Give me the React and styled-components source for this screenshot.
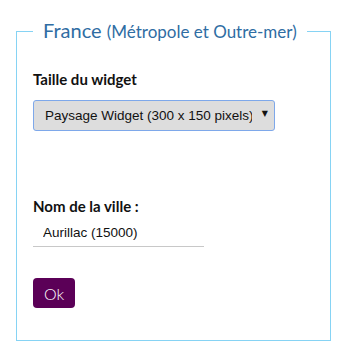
import React, { useState } from 'react';
import styled, { createGlobalStyle } from 'styled-components';

const GlobalStyle = createGlobalStyle`
  body {
    margin: 0;
    padding: 0;
    background: #fff;
    font-family: "Lato", "Noto Sans", sans-serif;
  }
`;

const Page = styled.div`
  padding: 18px 14px 14px 16px;
`;

const Fieldset = styled.fieldset`
  margin: 0;
  min-width: 0;
  border: 1px solid #86d3f4;
  padding: 26px 16px 32px 16px;
`;

const Legend = styled.legend`
  padding: 0 10px;
  color: #2f6da3;
  font-size: 20px;
  line-height: 24px;
  font-weight: 400;

  small {
    font-size: 17px;
  }
`;

const Field = styled.div`
  margin-bottom: ${({ $gap }) => $gap || 0}px;
`;

const Label = styled.label`
  display: block;
  font-size: 15px;
  font-weight: 700;
  color: #111;
  line-height: 18px;
  margin-bottom: ${({ $space }) => $space || 12}px;
`;

const SelectWrap = styled.div`
  position: relative;
  width: 242px;
`;

const Select = styled.select`
  appearance: none;
  -webkit-appearance: none;
  width: 100%;
  height: 31px;
  box-sizing: border-box;
  background: #dddddd;
  border: 1px solid #7ea8ea;
  border-radius: 3px;
  padding: 0 22px 0 11px;
  font-family: "Liberation Sans", Arial, sans-serif;
  font-size: 13.5px;
  color: #111;
  outline: none;
`;

const Arrow = styled.span`
  position: absolute;
  right: 7px;
  top: 9px;
  font-family: "DejaVu Sans", sans-serif;
  font-size: 8px;
  color: #111;
  pointer-events: none;
`;

const TextInput = styled.input`
  display: block;
  width: 171px;
  box-sizing: border-box;
  border: none;
  border-bottom: 1px solid #c8c8c8;
  padding: 0 10px 6px;
  font-family: "Liberation Sans", Arial, sans-serif;
  font-size: 13.5px;
  color: #111;
  outline: none;
  background: transparent;
`;

const Button = styled.button`
  display: block;
  margin-top: 31px;
  width: 42px;
  height: 30px;
  border: none;
  border-radius: 4px;
  background: #5b0057;
  color: #fff;
  font-family: "Lato", "Noto Sans", sans-serif;
  font-size: 16px;
  font-weight: 300;
  cursor: pointer;
  padding: 0;
`;

export default function App() {
  const [size, setSize] = useState('paysage');
  const [city, setCity] = useState('Aurillac (15000)');

  return (
    <>
      <GlobalStyle />
      <Page>
        <Fieldset>
          <Legend>
            France <small>(Métropole et Outre-mer)</small>
          </Legend>
          <Field $gap={66}>
            <Label htmlFor="taille">Taille du widget</Label>
            <SelectWrap>
              <Select id="taille" value={size} onChange={(e) => setSize(e.target.value)}>
                <option value="paysage">Paysage Widget (300 x 150 pixels)</option>
                <option value="portrait">Portrait Widget (150 x 300 pixels)</option>
              </Select>
              <Arrow>▼</Arrow>
            </SelectWrap>
          </Field>
          <Field>
            <Label htmlFor="ville" $space={10}>Nom de la ville :</Label>
            <TextInput id="ville" value={city} onChange={(e) => setCity(e.target.value)} />
          </Field>
          <Button>Ok</Button>
        </Fieldset>
      </Page>
    </>
  );
}
